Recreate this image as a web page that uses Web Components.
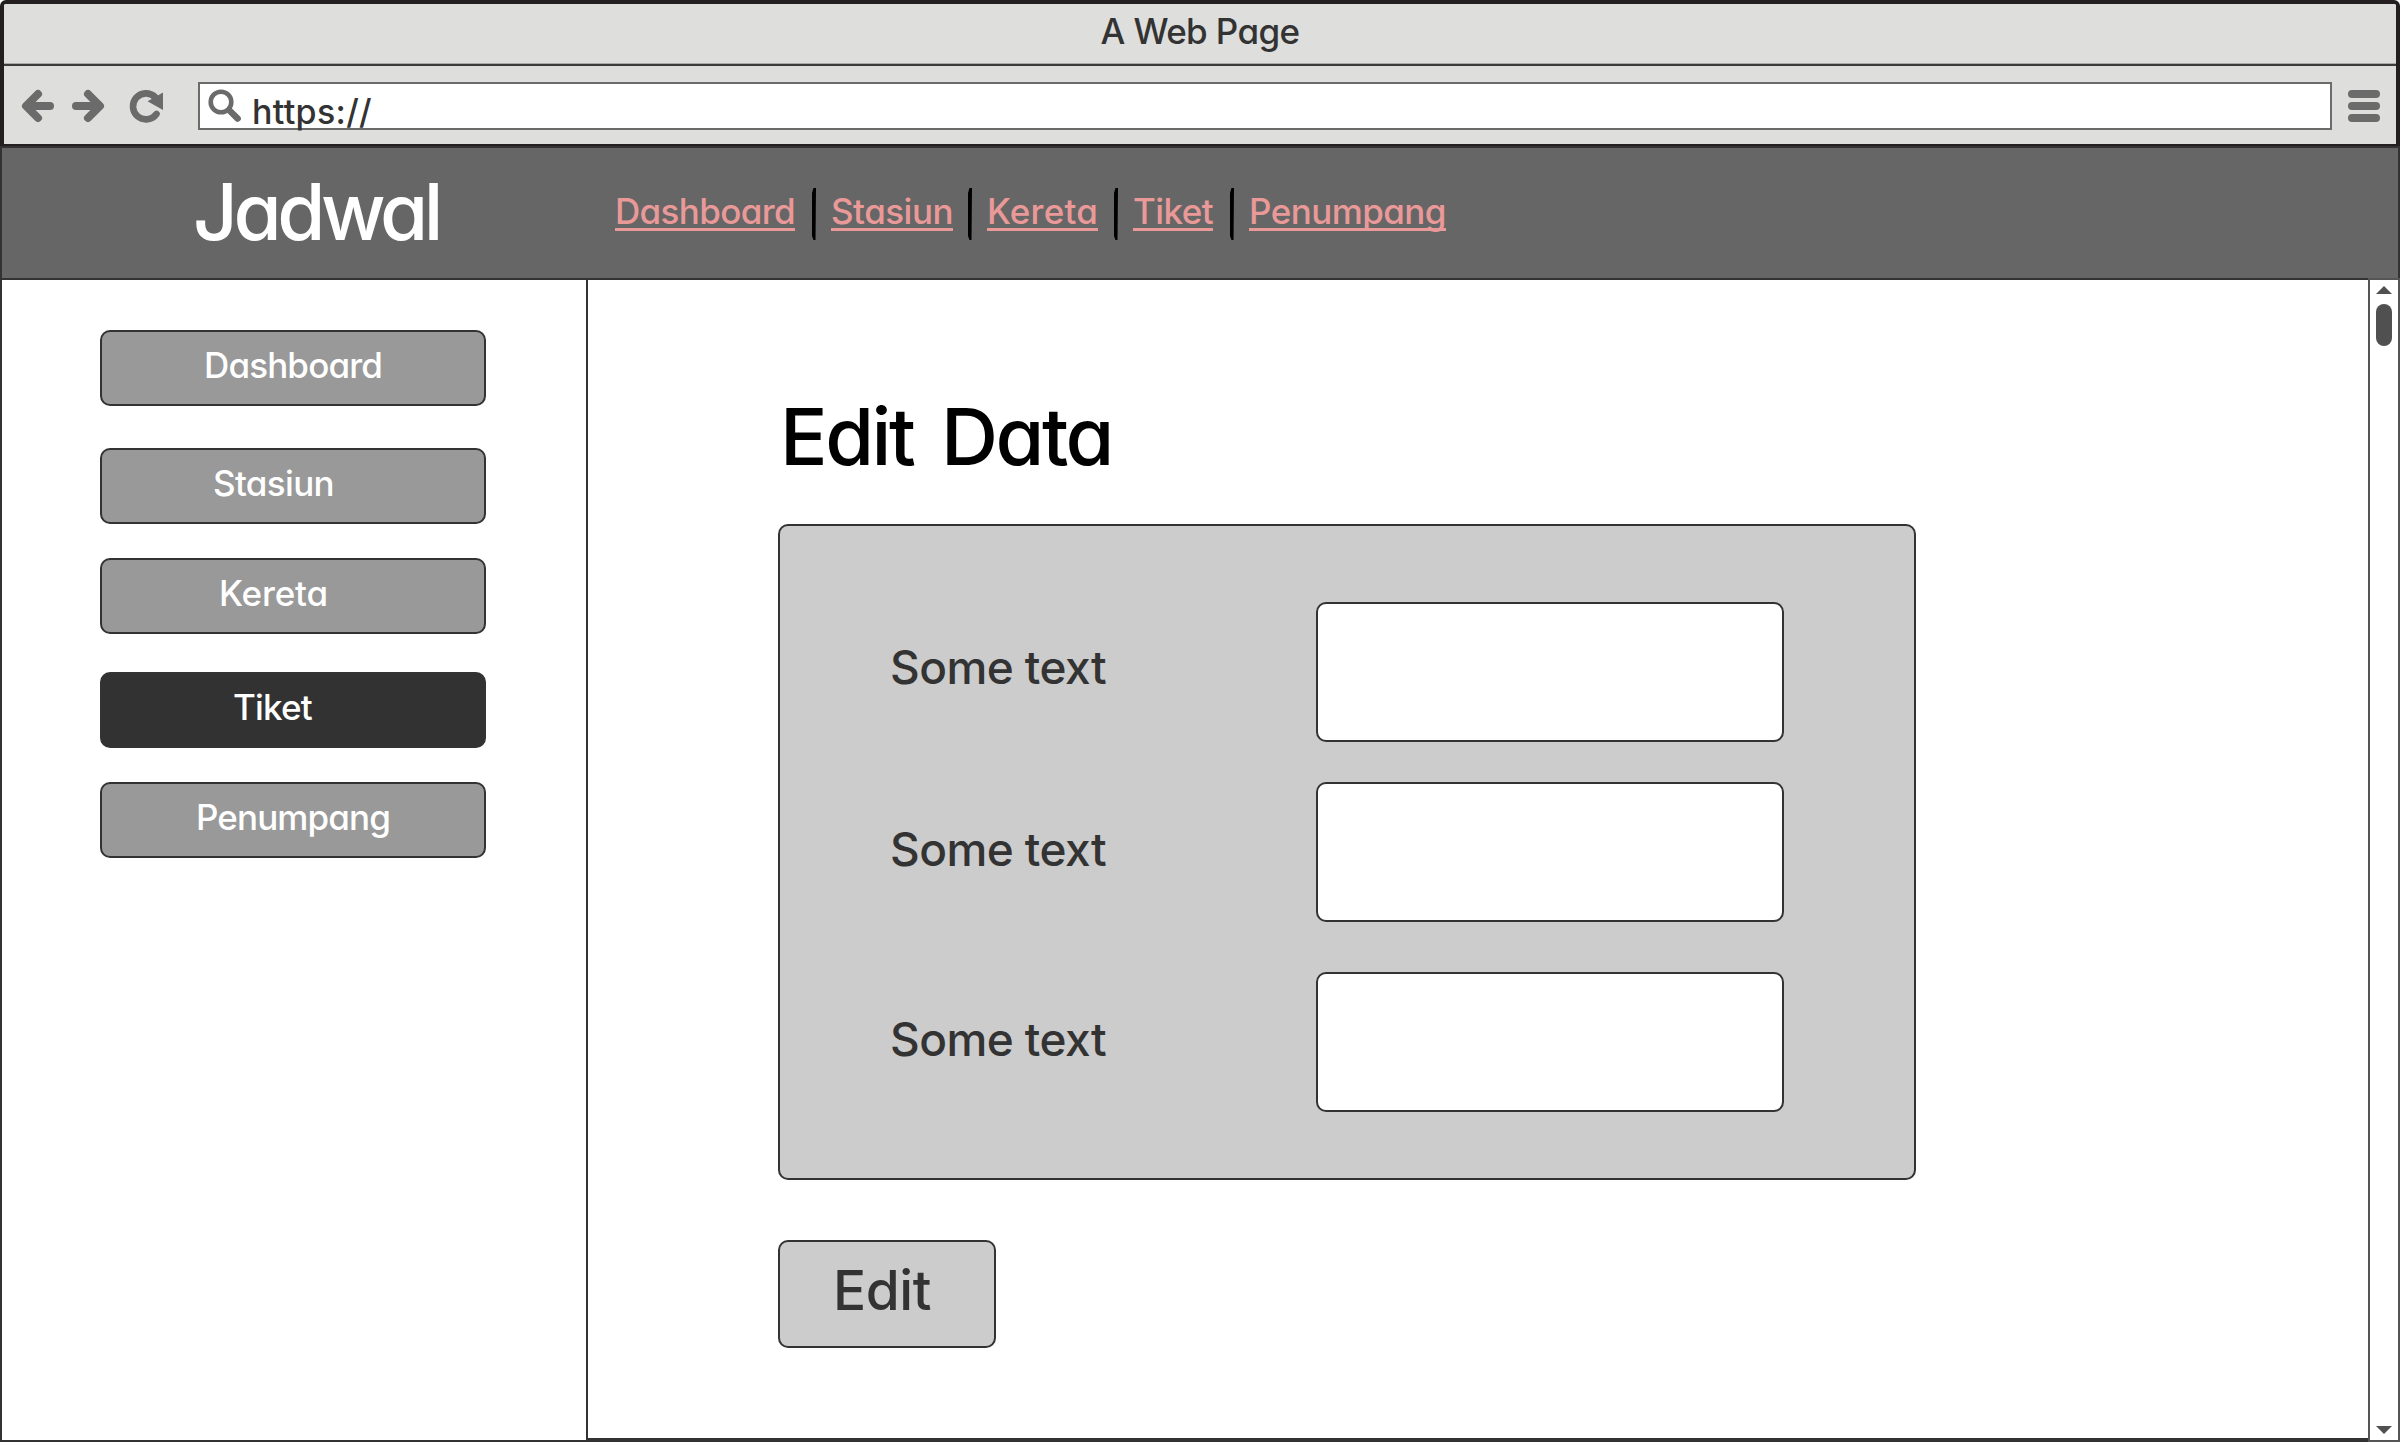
<!DOCTYPE html>
<html lang="id">
<head>
<meta charset="utf-8">
<title>A Web Page</title>
<style>
html,body{margin:0;height:100%;background:#fff}
body{font-family:Inter,"Open Sans","Liberation Sans",sans-serif;font-feature-settings:"cv11";font-weight:500;color:#333}
</style>
</head>
<body>
<web-window></web-window>
<script>
const define = (name, html, init) => {
  const tpl = document.createElement('template');
  tpl.innerHTML = html;
  customElements.define(name, class extends HTMLElement {
    constructor() {
      super();
      this.attachShadow({mode: 'open'}).append(tpl.content.cloneNode(true));
    }
    connectedCallback() { if (init) init.call(this, this.shadowRoot); }
  });
};

/* One line of text tracked out to a given advance width. */
define('sketch-text', `
<style>:host{display:inline-block;white-space:nowrap;line-height:1;flex:none}span{display:inline-block}</style>
<span><slot></slot></span>`, function (root) {
  const target = +this.getAttribute('width');
  this.style.fontSize = this.getAttribute('size') + 'px';
  this.style.width = target + 'px';
  const natural = root.querySelector('span').getBoundingClientRect().width;
  this.style.letterSpacing = (target - natural) / this.textContent.length + 'px';
});

define('title-bar', `
<style>:host{display:flex;height:59px;box-sizing:border-box;justify-content:center;align-items:center;padding-bottom:4px;background:#dededd}</style>
<sketch-text size="35" width="199">A Web Page</sketch-text>`);

define('tool-bar', `
<style>
:host{display:flex;height:81px;box-sizing:border-box;border-top:1px solid #aaa;background:#dededc;align-items:flex-start;box-shadow:inset 0 2px #3c3c3c;padding:18px 0 0 17px}
svg{display:block;flex:none}
.url{display:flex;box-sizing:border-box;width:2134px;height:48px;background:#fff;border:2px solid #6b6b6b;margin-left:31px;padding-left:8px}
sketch-text{margin:11px 0 0 10px}
.menu{margin:6px 0 0 14px}
</style>
<svg width="146" height="48" viewBox="21 82 146 48" fill="none" stroke="#6b6b6b" stroke-width="8" stroke-linecap="round" stroke-linejoin="round">
<path d="M50 106H28M38 94L26 106L38 118"/><path d="M76 106H98M88 94L100 106L88 118"/>
<path stroke-width="6.6" d="M156.500 114A13 13 0 1 1 155 97"/>
<path fill="#6b6b6b" stroke="none" d="M163 92.500V110L147.500 101.300L153.500 98Z"/>
</svg>
<div class="url">
<svg width="34" height="44" viewBox="208 84 34 44" fill="none" stroke="#6b6b6b" stroke-linecap="round"><circle cx="221" cy="102" r="10.300" stroke-width="4.600"/><path stroke-width="6.400" d="M230 111L237.700 118.600"/></svg>
<sketch-text size="34" width="120">https://</sketch-text>
</div>
<svg class="menu" width="36" height="36" fill="#6b6b6b"><rect x="2" y="2" width="32" height="8" rx="4"/><rect x="2" y="14" width="32" height="8" rx="4"/><rect x="2" y="26" width="32" height="8" rx="4"/></svg>`);

customElements.define('nav-links', class extends HTMLElement {
  connectedCallback() {
    const items = [['Dashboard',180,17,15],['Stasiun',122,15,15],['Kereta',111,16,15],['Tiket',80,17,15],['Penumpang',197,0,0]];
    this.attachShadow({mode: 'open'}).innerHTML = `
<style>
:host{display:flex;align-items:center}
a{display:flex;align-items:flex-start;color:#ea9999;height:34px;margin-bottom:3px;border-bottom:3px solid #ea9999;text-decoration:none}
svg{display:block;flex:none}
</style>` + items.map(([t, w, l, r]) =>
      `<a><sketch-text size="35" width="${w}">${t}</sketch-text></a>` +
      (l ? `<svg width="4" height="52" style="margin:0 ${r}px 0 ${l}px"><path d="M1.500 0H4L3.500 52H1.500L0 48V5Z" fill="#000"/></svg>` : '')).join('');
  }
});

define('site-header', `
<style>
:host{display:flex;box-sizing:border-box;height:134px;border:2px solid #333;background:#666;align-items:center}
.brand{color:#fff;margin:0 0 2px 191px}
nav-links{margin:2px 0 0 176px}
</style>
<sketch-text class="brand" size="78" width="246">Jadwal</sketch-text>
<nav-links></nav-links>`);

define('side-button', `
<style>
:host{display:flex;box-sizing:border-box;width:386px;height:76px;border:2px solid #333;border-radius:10px;background:#999;color:#fff;align-items:center;padding-bottom:6px}
:host([active]){background:#323232}
</style><slot></slot>`);

define('side-bar', `
<style>
:host{display:flex;flex-direction:column;box-sizing:border-box;width:588px;border:2px solid #333;border-top:0;padding:50px 0 0 98px;flex:none}
</style>
<side-button><sketch-text style="margin-left:102px" size="35" width="178">Dashboard</sketch-text></side-button>
<side-button style="margin-top:42px"><sketch-text style="margin-left:111px" size="35" width="121">Stasiun</sketch-text></side-button>
<side-button style="margin-top:34px"><sketch-text style="margin-left:117px" size="35" width="109">Kereta</sketch-text></side-button>
<side-button style="margin-top:38px" active><sketch-text style="margin-left:131px" size="35" width="79">Tiket</sketch-text></side-button>
<side-button style="margin-top:34px"><sketch-text style="margin-left:94px" size="35" width="194">Penumpang</sketch-text></side-button>`);

define('form-row', `
<style>
:host{display:flex;height:140px;align-items:center}
.box{box-sizing:border-box;width:468px;height:140px;background:#fff;border:2px solid #333;border-radius:10px;margin-left:210px}
sketch-text{margin-bottom:var(--lift,11px)}
</style>
<sketch-text size="46" width="216">Some text</sketch-text><div class="box"></div>`);

define('form-card', `
<style>
:host{display:flex;flex-direction:column;box-sizing:border-box;width:1138px;height:656px;border:2px solid #333;border-radius:10px;background:#ccc;padding:76px 0 0 110px}
</style>
<form-row></form-row><form-row style="margin-top:40px;--lift:7px"></form-row><form-row style="margin-top:50px;--lift:7px"></form-row>`);

define('edit-page', `
<style>
:host{display:flex;flex-direction:column;align-items:flex-start;box-sizing:border-box;flex:1;border-bottom:4px solid #333;padding:117px 0 0 190px}
h1{margin:0 0 0 2px;font:inherit;color:#000;display:flex;word-spacing:9px}
form-card{margin-top:48px}
.edit{display:flex;box-sizing:border-box;width:218px;height:108px;border:2px solid #333;border-radius:10px;background:#ccc;align-items:center;padding:0 0 7px 53px;margin-top:60px}
</style>
<h1><sketch-text size="79" width="332">Edit Data</sketch-text></h1>
<form-card></form-card>
<div class="edit"><sketch-text size="55" width="98">Edit</sketch-text></div>`);

define('scroll-bar', `
<style>
:host{display:flex;flex-direction:column;justify-content:space-between;box-sizing:border-box;width:32px;margin-top:-2px;border:2px solid #555;flex:none}
svg{display:block;width:28px}
</style>
<svg height="70" fill="#505050"><path d="M6 14L14 6L22 14Z"/><rect x="6" y="24" width="16" height="42" rx="8"/></svg>
<svg height="16" fill="#505050"><path d="M6 2H22L14 10Z"/></svg>`);

define('web-window', `
<style>
:host{display:flex;flex-direction:column;width:2400px;height:1442px;overflow:hidden}
.chrome{box-sizing:border-box;height:146px;border:4px solid #231f20;border-bottom-width:2px;border-radius:6px 6px 0 0;overflow:hidden}
main{display:flex;flex:1;min-height:0}
</style>
<div class="chrome"><title-bar></title-bar><tool-bar></tool-bar></div>
<site-header></site-header>
<main><side-bar></side-bar><edit-page></edit-page><scroll-bar></scroll-bar></main>`);
</script>
</body>
</html>
